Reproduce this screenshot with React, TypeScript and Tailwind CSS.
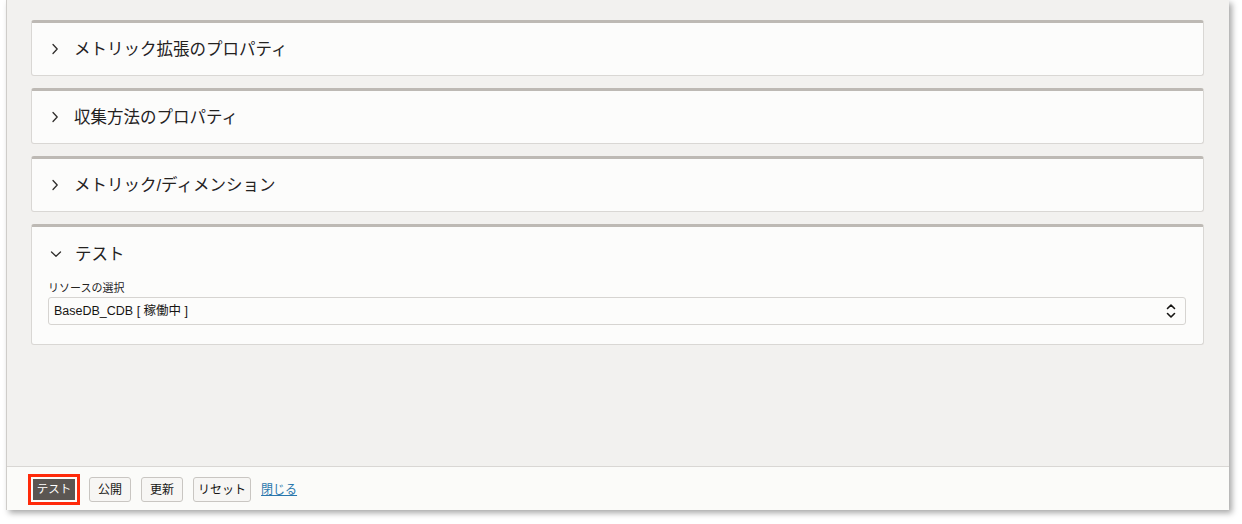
const font = { fontFamily: '"Liberation Sans", "Noto Sans CJK JP", sans-serif' };

function Chevron({ open }: { open?: boolean }) {
  return open ? (
    <svg width="12" height="8" viewBox="0 0 12 8" fill="none" stroke="#2f2d2b" strokeWidth="1.3" strokeLinecap="round" strokeLinejoin="round">
      <path d="M1.5 2 L6 6.2 L10.5 2" />
    </svg>
  ) : (
    <svg width="8" height="12" viewBox="0 0 8 12" fill="none" stroke="#2f2d2b" strokeWidth="1.3" strokeLinecap="round" strokeLinejoin="round">
      <path d="M2 1.5 L6.2 6 L2 10.5" />
    </svg>
  );
}

function Section({ title }: { title: string }) {
  return (
    <div className="h-[56px] rounded-[3px] border border-[#d9d7d4] border-t-[3px] border-t-[#bdb9b4] bg-[#fcfcfb] flex items-center pl-[19px]">
      <Chevron />
      <span className="ml-[15px] text-[16.5px] text-[#24221f]">{title}</span>
    </div>
  );
}

function Select() {
  return (
    <div className="flex flex-col">
      <label className="text-[11px] leading-[14px] text-[#24221f]">リソースの選択</label>
      <div className="mt-[2px] h-[28px] rounded-[3px] border border-[#d6d4d1] bg-[#fcfcfb] flex items-center justify-between pl-[5px] pr-[9px]">
        <span className="text-[12.5px] text-[#161513]">BaseDB_CDB [ 稼働中 ]</span>
        <svg width="10" height="16" viewBox="0 0 10 16" fill="none" stroke="#161513" strokeWidth="1.6" strokeLinecap="round" strokeLinejoin="round">
          <path d="M1.5 5.5 L5 2 L8.5 5.5" />
          <path d="M1.5 10.5 L5 14 L8.5 10.5" />
        </svg>
      </div>
    </div>
  );
}

const btn = 'h-[25px] rounded-[3px] border border-[#c9c6c2] bg-[#f7f6f4] text-[12px] text-[#161513]';

export default function App() {
  return (
    <div className="w-[1242px] h-[524px] bg-white overflow-hidden" style={font}>
      <div className="ml-[6px] w-[1223px] h-[510px] flex flex-col bg-[#f2f1ef] border-l border-[#cfcdca] shadow-[3px_3px_6px_rgba(0,0,0,0.35)]">
        <div className="flex-1 flex flex-col gap-[12px] pt-[20px] pl-[24px] pr-[25px]">
          <Section title="メトリック拡張のプロパティ" />
          <Section title="収集方法のプロパティ" />
          <Section title="メトリック/ディメンション" />
          <div className="h-[121px] rounded-[3px] border border-[#d9d7d4] border-t-[3px] border-t-[#bdb9b4] bg-[#fcfcfb]">
            <div className="h-[54px] flex items-center pl-[18px]">
              <Chevron open />
              <span className="ml-[13px] text-[16.5px] text-[#24221f]">テスト</span>
            </div>
            <div className="pl-[16px] pr-[17px]">
              <Select />
            </div>
          </div>
        </div>
        <div className="h-[44px] border-t border-[#d9d7d4] bg-[#fbfbf9] flex items-center pl-[21px] pt-[2px] gap-[10px]">
          <div className="border-[3px] border-[#ff2a0a] p-[2px] -mr-[1px]">
            <div className="w-[42px] h-[21px] bg-[#5b5652] text-white text-[11.5px] leading-[21px] text-center">テスト</div>
          </div>
          <button className={`${btn} px-[8px]`}>公開</button>
          <button className={`${btn} px-[8px]`}>更新</button>
          <button className={`${btn} px-[4px]`}>リセット</button>
          <a className="text-[12px] text-[#2a77ad] underline">閉じる</a>
        </div>
      </div>
    </div>
  );
}
